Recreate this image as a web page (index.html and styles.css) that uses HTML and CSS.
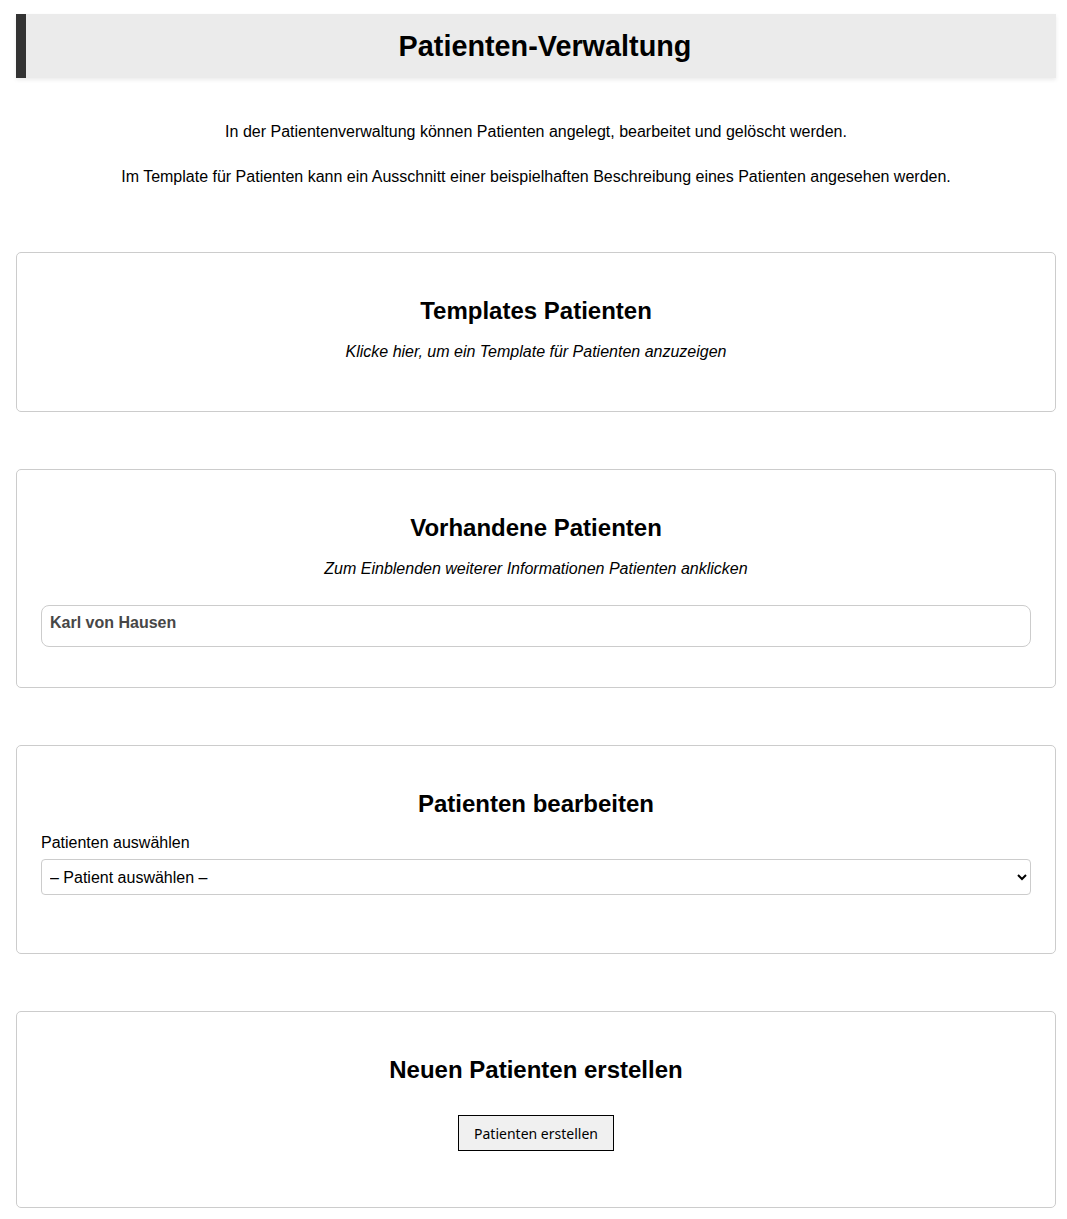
FILE: index.html
```html
<!DOCTYPE html>
<html lang="de">
<head>
<meta charset="utf-8">
<title>Patienten-Verwaltung</title>
<link rel="stylesheet" href="styles.css">
</head>
<body>
<div class="page">
  <header class="title-bar">
    <h1>Patienten-Verwaltung</h1>
  </header>
  <section class="intro">
    <p>In der Patientenverwaltung können Patienten angelegt, bearbeitet und gelöscht werden.</p>
    <p>Im Template für Patienten kann ein Ausschnitt einer beispielhaften Beschreibung eines Patienten angesehen werden.</p>
  </section>

  <section class="card card-templates">
    <h2>Templates Patienten</h2>
    <p class="hint">Klicke hier, um ein Template für Patienten anzuzeigen</p>
  </section>

  <section class="card card-list">
    <h2>Vorhandene Patienten</h2>
    <p class="hint">Zum Einblenden weiterer Informationen Patienten anklicken</p>
    <div class="patient">Karl von Hausen</div>
  </section>

  <section class="card card-edit">
    <h2>Patienten bearbeiten</h2>
    <label class="field-label" for="sel">Patienten auswählen</label>
    <select id="sel" class="select">
      <option>– Patient auswählen –</option>
    </select>
  </section>

  <section class="card card-new">
    <h2>Neuen Patienten erstellen</h2>
    <div class="btn-row"><button class="btn">Patienten erstellen</button></div>
  </section>
</div>
</body>
</html>
```
FILE: styles.css
```css
html, body {
  margin: 0;
  padding: 0;
  background: #fff;
}
body {
  font-family: "Liberation Sans", Arial, sans-serif;
  font-size: 16px;
  color: #000;
}
.page {
  padding: 14px 11px 0 16px;
}
.title-bar {
  background: #ebebeb;
  border-left: 10px solid #333;
  height: 64px;
  display: flex;
  align-items: center;
  justify-content: center;
  padding-left: 8px;
  box-shadow: 0 2px 4px rgba(0, 0, 0, 0.08);
}
.title-bar h1 {
  margin: 0;
  font-size: 28.8px;
  font-weight: bold;
}
.intro {
  text-align: center;
  padding-top: 45px;
}
.intro p {
  margin: 0 0 27px;
  line-height: 18px;
}
.intro p:last-child {
  margin-bottom: 0;
}
.card {
  border: 1px solid #ccc;
  border-radius: 5px;
  padding: 24px 24px 0;
  margin-top: 57px;
}
.intro + .card {
  margin-top: 66px;
}
.card h2 {
  margin: 20px 0 0;
  font-size: 24px;
  line-height: 28px;
  text-align: center;
}
.hint {
  margin: 18px 0 0;
  font-style: italic;
  text-align: center;
  line-height: 18px;
}
.card-templates {
  padding-bottom: 50px;
}
.card-list .hint {
  margin-bottom: 27px;
}
.card-list {
  padding-bottom: 40px;
}
.patient {
  border: 1px solid #ccc;
  border-radius: 8px;
  padding: 8px 8px 14px;
  font-weight: bold;
  color: #474747;
  line-height: 18px;
}
.field-label {
  display: block;
  margin-top: 16px;
  line-height: 18px;
}
.select {
  display: block;
  width: 100%;
  height: 36px;
  margin-top: 7px;
  border: 1px solid #ccc;
  border-radius: 4px;
  background: #fff;
  font-family: "Liberation Sans", Arial, sans-serif;
  font-size: 16px;
  padding: 0 4px;
  color: #000;
}
.card-edit {
  padding-bottom: 58px;
}
.btn-row {
  display: flex;
  justify-content: center;
  margin-top: 31px;
}
.btn {
  font-family: "Noto Sans", "Open Sans", sans-serif;
  font-size: 14px;
  height: 36px;
  padding: 0 15px;
  background: #f0f0f0;
  border: 1px solid #000;
  border-radius: 0;
  color: #000;
}
.card-new {
  padding-bottom: 56px;
}
```
